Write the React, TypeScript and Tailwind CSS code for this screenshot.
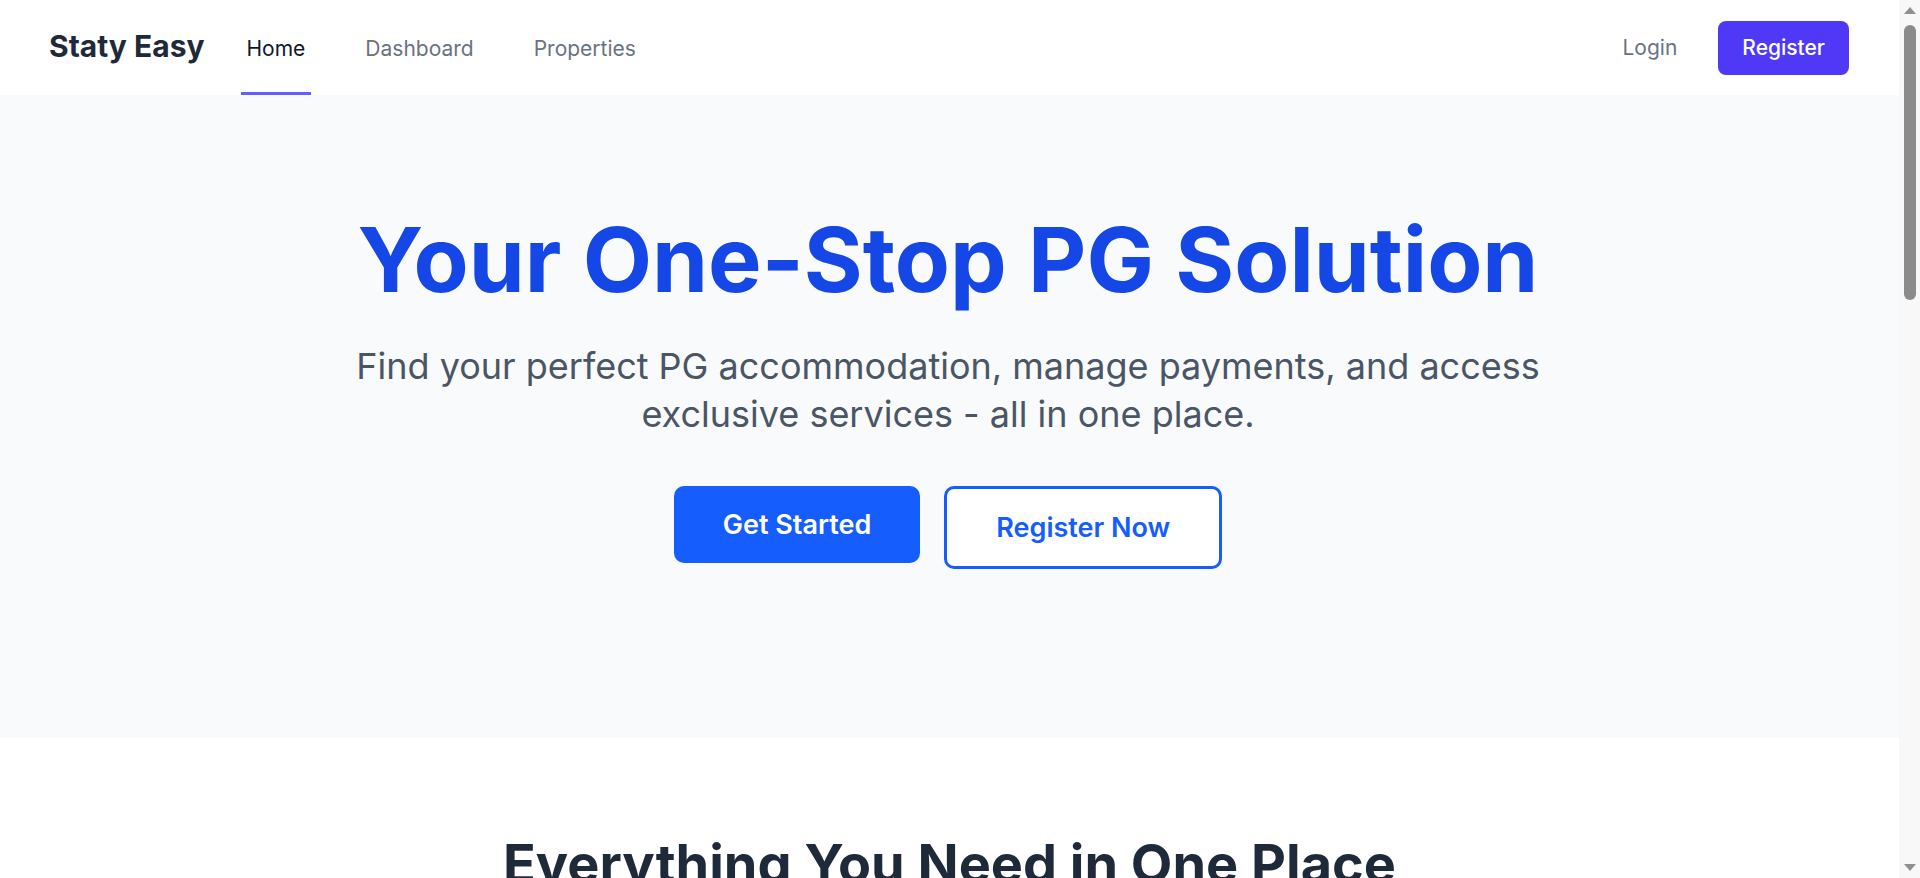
import React from "react";

const features = [
  { title: "Find PGs Easily", desc: "Browse verified PG accommodations near you with detailed photos, amenities and honest reviews." },
  { title: "Manage Payments", desc: "Pay rent, track dues and download receipts securely from a single dashboard." },
  { title: "Exclusive Services", desc: "Access laundry, meals, cleaning and more services curated for PG residents." },
  { title: "Verified Owners", desc: "Every property owner is verified so you can book with complete confidence." },
  { title: "Instant Support", desc: "Raise maintenance requests and get quick responses from property managers." },
  { title: "Smart Dashboard", desc: "Keep track of your stay, bookings and notifications in one place." },
];

const steps = [
  { n: "1", title: "Create an account", desc: "Register as a tenant or property owner in just a few clicks." },
  { n: "2", title: "Search properties", desc: "Filter PGs by location, budget, sharing type and amenities." },
  { n: "3", title: "Move in & relax", desc: "Book your room, pay online and manage everything from your dashboard." },
];

function FakeScrollbar() {
  return (
    <div className="fixed top-0 right-0 h-screen w-[21px] bg-[#f8f8f8] flex flex-col items-center">
      <svg width="16" height="16" viewBox="0 0 16 16" className="mt-[2px] shrink-0">
        <path d="M2 12 L8 5 L14 12 Z" fill="#909090" />
      </svg>
      <div className="mt-[7px] w-[12px] h-[275px] rounded-full bg-[#8b8b8b] shrink-0" />
      <div className="flex-1" />
      <svg width="16" height="16" viewBox="0 0 16 16" className="mb-[2px] shrink-0">
        <path d="M2 4 L8 11 L14 4 Z" fill="#909090" />
      </svg>
    </div>
  );
}

export default function App() {
  return (
    <div className="min-h-screen bg-white font-['Inter','Noto_Sans',sans-serif]">
      <div className="w-[calc(100%-21px)]">
        {/* Header */}
        <header className="bg-white h-[95px] flex items-stretch justify-between pl-[49px] pr-[50px]">
          <div className="flex items-stretch">
            <div className="flex items-center pb-[2px]">
              <span className="text-[30px] font-bold text-gray-800">Staty Easy</span>
            </div>
            <nav className="flex items-stretch ml-[36px] gap-[48px]">
              <a className="flex items-center px-[6px] pt-[5px] border-b-[3px] border-indigo-500 text-[21px] text-gray-900">Home</a>
              <a className="flex items-center px-[6px] pt-[5px] border-b-[3px] border-transparent text-[21px] text-gray-500">Dashboard</a>
              <a className="flex items-center px-[6px] pt-[5px] border-b-[3px] border-transparent text-[21px] text-gray-500">Properties</a>
            </nav>
          </div>
          <div className="flex items-center gap-[41px]">
            <a className="text-[21px] text-gray-500">Login</a>
            <a className="bg-indigo-600 text-white text-[21px] font-medium leading-[28px] px-[24px] py-[13px] rounded-[8px]">Register</a>
          </div>
        </header>

        {/* Hero */}
        <section className="bg-gray-50 h-[643px] pt-[120px] pr-[3px]">
          <div className="flex flex-col items-center text-center">
            <h1 className="text-[90px] leading-[90px] font-bold text-blue-700">Your One-Stop PG Solution</h1>
            <p className="mt-[37px] max-w-[1280px] text-[36px] leading-[48px] text-gray-600">
              Find your perfect PG accommodation, manage payments, and access exclusive services - all in one place.
            </p>
            <div className="mt-[48px] flex items-start gap-[24px]">
              <a className="bg-blue-600 text-white text-[27px] font-semibold leading-[35px] px-[49px] py-[21px] rounded-[10px]">Get Started</a>
              <a className="bg-white border-[3px] border-blue-600 text-blue-600 text-[27px] font-semibold leading-[35px] px-[49px] py-[21px] rounded-[10px]">Register Now</a>
            </div>
          </div>
        </section>

        {/* Features */}
        <section className="bg-white pt-[96px] pb-[120px] px-[100px]">
          <h2 className="text-center text-[54px] leading-[60px] font-bold text-gray-800">Everything You Need in One Place</h2>
          <p className="mt-[20px] text-center text-[22px] text-gray-500">Simple tools for tenants and property owners alike.</p>
          <div className="mt-[80px] grid grid-cols-3 gap-[40px]">
            {features.map((f) => (
              <div key={f.title} className="rounded-[12px] border border-gray-200 bg-white p-[40px] shadow-sm">
                <div className="w-[60px] h-[60px] rounded-full bg-blue-100 flex items-center justify-center">
                  <div className="w-[24px] h-[24px] rounded-[6px] bg-blue-600" />
                </div>
                <h3 className="mt-[24px] text-[26px] font-semibold text-gray-800">{f.title}</h3>
                <p className="mt-[12px] text-[20px] leading-[30px] text-gray-600">{f.desc}</p>
              </div>
            ))}
          </div>
        </section>

        {/* How it works */}
        <section className="bg-gray-50 py-[120px] px-[100px]">
          <h2 className="text-center text-[54px] leading-[60px] font-bold text-gray-800">How It Works</h2>
          <div className="mt-[80px] grid grid-cols-3 gap-[40px]">
            {steps.map((s) => (
              <div key={s.n} className="flex flex-col items-center text-center">
                <div className="w-[80px] h-[80px] rounded-full bg-indigo-600 text-white text-[32px] font-bold flex items-center justify-center">{s.n}</div>
                <h3 className="mt-[24px] text-[26px] font-semibold text-gray-800">{s.title}</h3>
                <p className="mt-[12px] text-[20px] leading-[30px] text-gray-600 max-w-[420px]">{s.desc}</p>
              </div>
            ))}
          </div>
        </section>

        {/* Testimonials */}
        <section className="bg-white py-[120px] px-[100px]">
          <h2 className="text-center text-[54px] leading-[60px] font-bold text-gray-800">What Our Residents Say</h2>
          <div className="mt-[80px] grid grid-cols-3 gap-[40px]">
            {["Priya S.", "Rahul K.", "Ananya M."].map((n) => (
              <div key={n} className="rounded-[12px] bg-gray-50 p-[40px] h-[300px]">
                <p className="text-[20px] leading-[30px] text-gray-600">
                  "Staty Easy made finding a PG and paying rent completely hassle-free. Highly recommended!"
                </p>
                <p className="mt-[24px] text-[20px] font-semibold text-gray-800">{n}</p>
              </div>
            ))}
          </div>
        </section>

        {/* CTA */}
        <section className="bg-blue-700 py-[120px] px-[100px] text-center">
          <h2 className="text-[54px] leading-[60px] font-bold text-white">Ready to find your next home?</h2>
          <p className="mt-[20px] text-[24px] text-blue-100">Join thousands of residents who trust Staty Easy.</p>
          <div className="mt-[40px] flex justify-center">
            <a className="bg-white text-blue-700 text-[27px] font-semibold px-[49px] py-[21px] rounded-[10px]">Get Started</a>
          </div>
        </section>

        {/* Footer */}
        <footer className="bg-gray-800 py-[80px] px-[100px] h-[420px]">
          <div className="grid grid-cols-4 gap-[40px] text-gray-300 text-[18px]">
            <div>
              <div className="text-[28px] font-bold text-white">Staty Easy</div>
              <p className="mt-[16px] leading-[28px]">Your one-stop PG solution.</p>
            </div>
            <div className="flex flex-col gap-[12px]"><span className="text-white font-semibold">Company</span><span>About</span><span>Careers</span><span>Contact</span></div>
            <div className="flex flex-col gap-[12px]"><span className="text-white font-semibold">Resources</span><span>Help Center</span><span>Privacy</span><span>Terms</span></div>
            <div className="flex flex-col gap-[12px]"><span className="text-white font-semibold">Follow</span><span>Twitter</span><span>Instagram</span><span>LinkedIn</span></div>
          </div>
          <p className="mt-[60px] text-center text-gray-400 text-[16px]">© 2024 Staty Easy. All rights reserved.</p>
        </footer>
      </div>
      <FakeScrollbar />
    </div>
  );
}
